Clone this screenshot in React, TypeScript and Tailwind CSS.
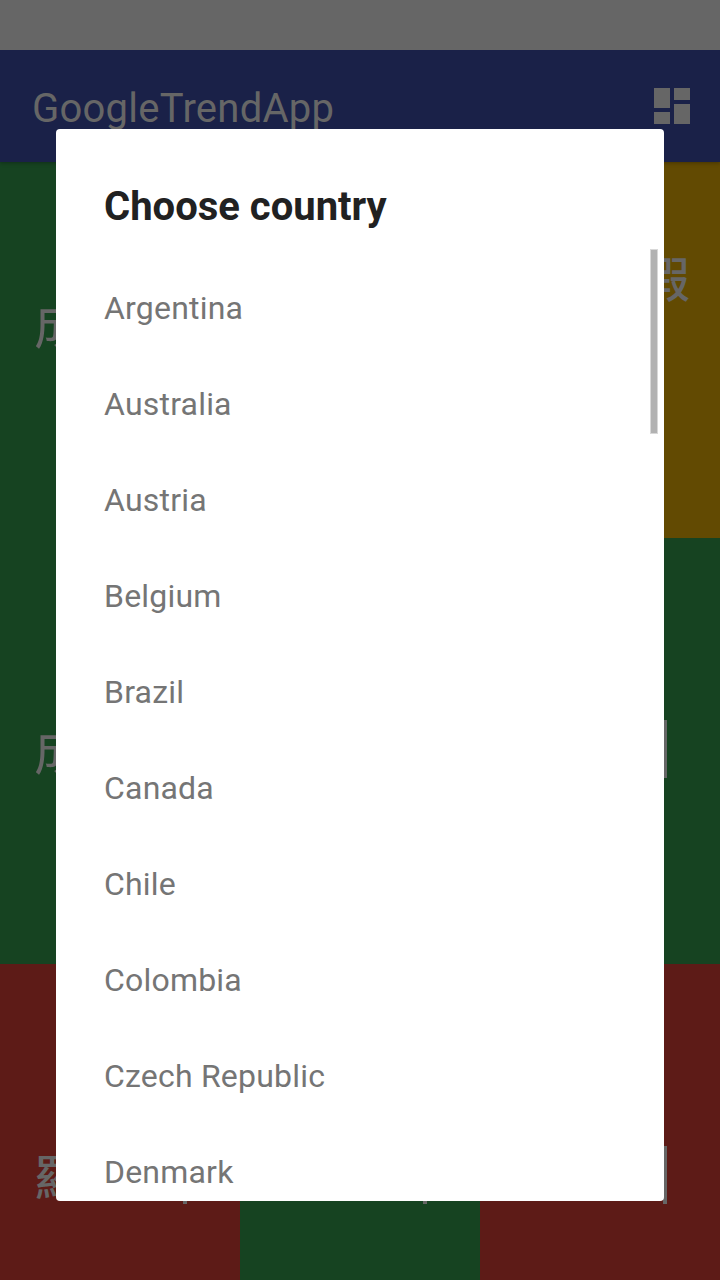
const countries = [
  "Argentina",
  "Australia",
  "Austria",
  "Belgium",
  "Brazil",
  "Canada",
  "Chile",
  "Colombia",
  "Czech Republic",
  "Denmark",
];

type TrendCell = {
  color: string;
  text?: string;
  textClass?: string;
  caretClass?: string;
};

const cells: TrendCell[] = [
  { color: "bg-[#164321]", text: "成", textClass: "pt-[129px] pl-[34px] text-[51px]" },
  { color: "bg-[#164321]" },
  { color: "bg-[#624a02]", text: "假", textClass: "pt-[83px] pl-[162px] font-medium" },
  { color: "bg-[#164321]", text: "成", textClass: "pt-[179px] pl-[34px] text-[51px]" },
  { color: "bg-[#164321]" },
  { color: "bg-[#164321]", caretClass: "top-[182px]" },
  { color: "bg-[#5d1b17]", text: "羅", textClass: "pt-[179px] pl-[34px] font-medium", caretClass: "top-[182px]" },
  { color: "bg-[#164321]", caretClass: "top-[182px]" },
  { color: "bg-[#5d1b17]", caretClass: "top-[182px]" },
];

function Cell({ color, text, textClass = "", caretClass }: TrendCell) {
  return (
    <div className={`relative overflow-hidden text-[48px] leading-[72px] text-[#666] ${color}`}>
      {text && <div className={textClass}>{text}</div>}
      {caretClass && <span className={`absolute left-[183px] h-[57.5px] w-1 bg-[#666] ${caretClass}`} />}
    </div>
  );
}

function DashboardIcon() {
  return (
    <svg viewBox="0 0 36 36" className="size-9 fill-[#666]" aria-hidden="true">
      <path d="M0 0h16v20H0zM20 0h16v12H20zM0 24h16v12H0zM20 16h16v20H20z" />
    </svg>
  );
}

export default function App() {
  return (
    <div className="relative flex h-[1280px] w-[720px] flex-col overflow-hidden bg-[#164321] font-['Roboto','Noto_Sans_CJK_TC',sans-serif]">
      <div className="z-20 h-[50px] shrink-0 bg-[#666]" />
      <header className="z-10 flex h-28 shrink-0 items-center justify-between bg-[#1a2148] pr-[30px] pl-8 shadow-[0_1px_4px_rgba(0,0,0,0.3)]">
        <h1 className="pt-1.5 text-[40px] leading-[48px] tracking-[0.25px] text-[#666]">GoogleTrendApp</h1>
        <DashboardIcon />
      </header>
      <main className="grid h-[1118px] shrink-0 grid-cols-3 grid-rows-[376px_426px_316px]">
        {cells.map((cell, i) => (
          <Cell key={i} {...cell} />
        ))}
      </main>

      <div className="absolute inset-0 z-30 flex px-14 pt-[129px] pb-[79px]">
        <section role="dialog" className="relative flex-1 overflow-hidden rounded-[4px] bg-white px-12 pt-[54px]">
          <h2 className="h-[77px] text-[40px] leading-[48px] font-bold text-[#212121]">Choose country</h2>
          <ul className="text-[32px] text-[#757575]">
            {countries.map((country) => (
              <li key={country} className="flex h-24 items-center tracking-[0.2px]">
                {country}
              </li>
            ))}
          </ul>
          <div className="absolute top-[120px] right-[6px] h-[185px] w-2 border border-[#d8d8d8] bg-[#b2b2b2]" />
        </section>
      </div>
    </div>
  );
}
